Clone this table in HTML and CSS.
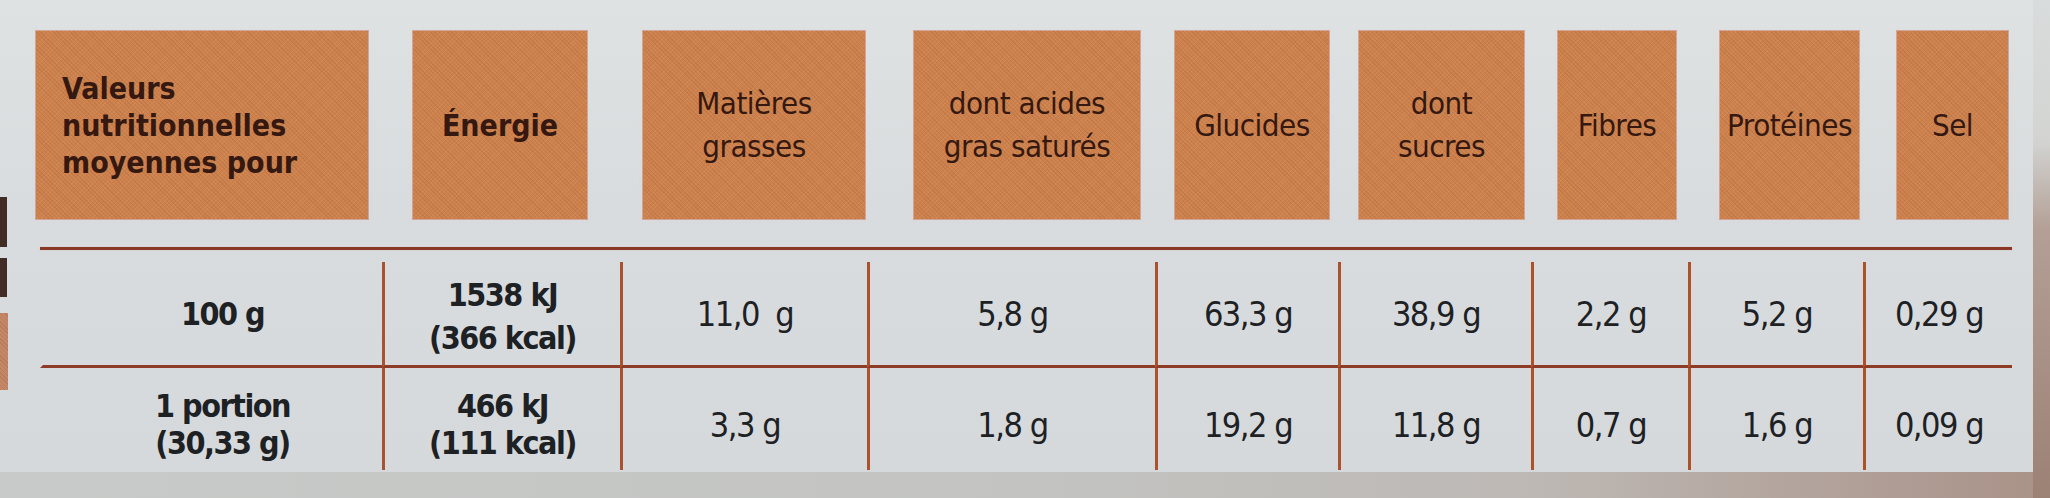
FILE: index.html
```html
<!DOCTYPE html>
<html lang="fr">
<head>
<meta charset="utf-8">
<title>Valeurs nutritionnelles</title>
<link rel="stylesheet" href="styles.css">
</head>
<body>
<div class="page">
  <div class="panel">
    <div class="edge">
      <span class="e e-gap1"></span>
      <span class="e e-dark e-d1"></span>
      <span class="e e-gap2"></span>
      <span class="e e-dark e-d2"></span>
      <span class="e e-gap3"></span>
      <span class="e e-orange"></span>
    </div>
    <div class="content">
      <div class="head">
        <div class="hbox hb1 strong left">Valeurs<br>nutritionnelles<br>moyennes pour</div>
        <div class="hbox hb2 strong">Énergie</div>
        <div class="hbox hb3">Matières<br>grasses</div>
        <div class="hbox hb4">dont acides<br>gras saturés</div>
        <div class="hbox hb5">Glucides</div>
        <div class="hbox hb6">dont<br>sucres</div>
        <div class="hbox hb7">Fibres</div>
        <div class="hbox hb8">Protéines</div>
        <div class="hbox hb9">Sel</div>
      </div>
      <div class="rule"></div>
      <div class="grid">
        <div class="cell r1 first strong">100 g</div>
        <div class="cell r1 strong two">1538 kJ<br>(366 kcal)</div>
        <div class="cell r1">11,0&nbsp;&nbsp;g</div>
        <div class="cell r1">5,8 g</div>
        <div class="cell r1">63,3 g</div>
        <div class="cell r1">38,9 g</div>
        <div class="cell r1">2,2 g</div>
        <div class="cell r1">5,2 g</div>
        <div class="cell r1">0,29 g</div>

        <div class="cell r2 first strong two2">1 portion<br>(30,33 g)</div>
        <div class="cell r2 strong two2">466 kJ<br>(111 kcal)</div>
        <div class="cell r2">3,3 g</div>
        <div class="cell r2">1,8 g</div>
        <div class="cell r2">19,2 g</div>
        <div class="cell r2">11,8 g</div>
        <div class="cell r2">0,7 g</div>
        <div class="cell r2">1,6 g</div>
        <div class="cell r2">0,09 g</div>
      </div>
    </div>
  </div>
</div>
</body>
</html>
```

FILE: styles.css
```css
html, body {
  margin: 0;
  padding: 0;
}

body {
  width: 2050px;
  height: 498px;
  overflow: hidden;
  font-family: "DejaVu Sans Condensed", "Liberation Sans Narrow", "DejaVu Sans", sans-serif;
  font-stretch: condensed;
}

.page {
  width: 2050px;
  height: 498px;
  display: flex;
  align-items: flex-start;
  background:
    linear-gradient(to bottom, #d9dcdc 0px, #d3d4d2 140px, #b39f96 230px, #9c8175 100%) right top / 17px 100% no-repeat,
    linear-gradient(to right, #c8cac9 0%, #c3c4c2 50%, #bdb8b4 75%, #a99187 100%);
}

.panel {
  width: 2033px;
  height: 472px;
  display: flex;
  background: linear-gradient(to bottom, #dee2e3 0%, #d8dcde 45%, #d5d9db 100%);
}

/* left decorative strip (photo edge) */
.edge {
  width: 8px;
  display: flex;
  flex-direction: column;
}
.e { display: block; }
.e-gap1 { height: 197px; }
.e-dark { width: 7px; background: #432b26; }
.e-d1 { height: 50px; }
.e-gap2 { height: 11px; }
.e-d2 { height: 39px; }
.e-gap3 { height: 16px; }
.e-orange {
  width: 8px;
  height: 77px;
  background: #c58765;
  background-image: repeating-linear-gradient(45deg, rgba(80,40,20,.12) 0 1px, transparent 1px 3px);
}

.content {
  flex: 1;
  padding-top: 31px;
  display: flex;
  flex-direction: column;
}

/* header row */
.head {
  display: flex;
  height: 188px;
}

.hbox {
  height: 188px;
  display: flex;
  align-items: center;
  justify-content: center;
  text-align: center;
  color: #35180f;
  font-size: 31px;
  letter-spacing: -0.5px;
  line-height: 43px;
  background-color: #cd814d;
  background-image:
    repeating-linear-gradient(45deg, rgba(95,40,15,.10) 0 1px, transparent 1px 3px),
    repeating-linear-gradient(-45deg, rgba(255,215,170,.08) 0 1px, transparent 1px 3px);
  box-shadow: 0 0 0 1px rgba(196,120,96,.55), 0 0 2px 1px rgba(240,215,215,.5);
}

.hbox.strong {
  font-weight: bold;
  font-size: 30px;
  letter-spacing: 0;
  line-height: 37px;
}

.hbox.left {
  justify-content: flex-start;
  text-align: left;
  padding-left: 26px;
  box-sizing: border-box;
}

.hb1 { width: 332px; margin-left: 28px; }
.hb2 { width: 174px; margin-left: 45px; }
.hb3 { width: 222px; margin-left: 56px; }
.hb4 { width: 226px; margin-left: 49px; }
.hb5 { width: 154px; margin-left: 35px; }
.hb6 { width: 165px; margin-left: 30px; }
.hb7 { width: 118px; margin-left: 34px; }
.hb8 { width: 139px; margin-left: 44px; }
.hb9 { width: 111px; margin-left: 38px; }

/* table */
.rule {
  margin-top: 28px;
  margin-left: 32px;
  width: 1972px;
  height: 3px;
  background: #8a3826;
  box-shadow: 0 0 1px 0 rgba(200,110,70,.6);
}

.grid {
  margin-top: 12px;
  margin-left: 32px;
  width: 1972px;
  display: grid;
  grid-template-columns: 342px 238px 247px 288px 183px 193px 157px 175px 149px;
  grid-template-rows: 106px 102px;
}

.cell {
  box-sizing: border-box;
  display: flex;
  align-items: center;
  justify-content: center;
  text-align: center;
  color: #1e2124;
  font-size: 34px;
  letter-spacing: -1.5px;
  line-height: 40px;
  border-left: 3px solid #ab522c;
}

.cell.first {
  border-left-color: transparent;
  padding-left: 20px;
}

.cell.strong {
  font-weight: bold;
  font-size: 32px;
  letter-spacing: -1.5px;
}

.cell.two { line-height: 43px; padding-top: 6px; }
.cell.two2 { line-height: 37px; }

.r1 {
  border-bottom: 3px solid #8e3b27;
}

.r2 {
  padding-top: 12px;
}
```
